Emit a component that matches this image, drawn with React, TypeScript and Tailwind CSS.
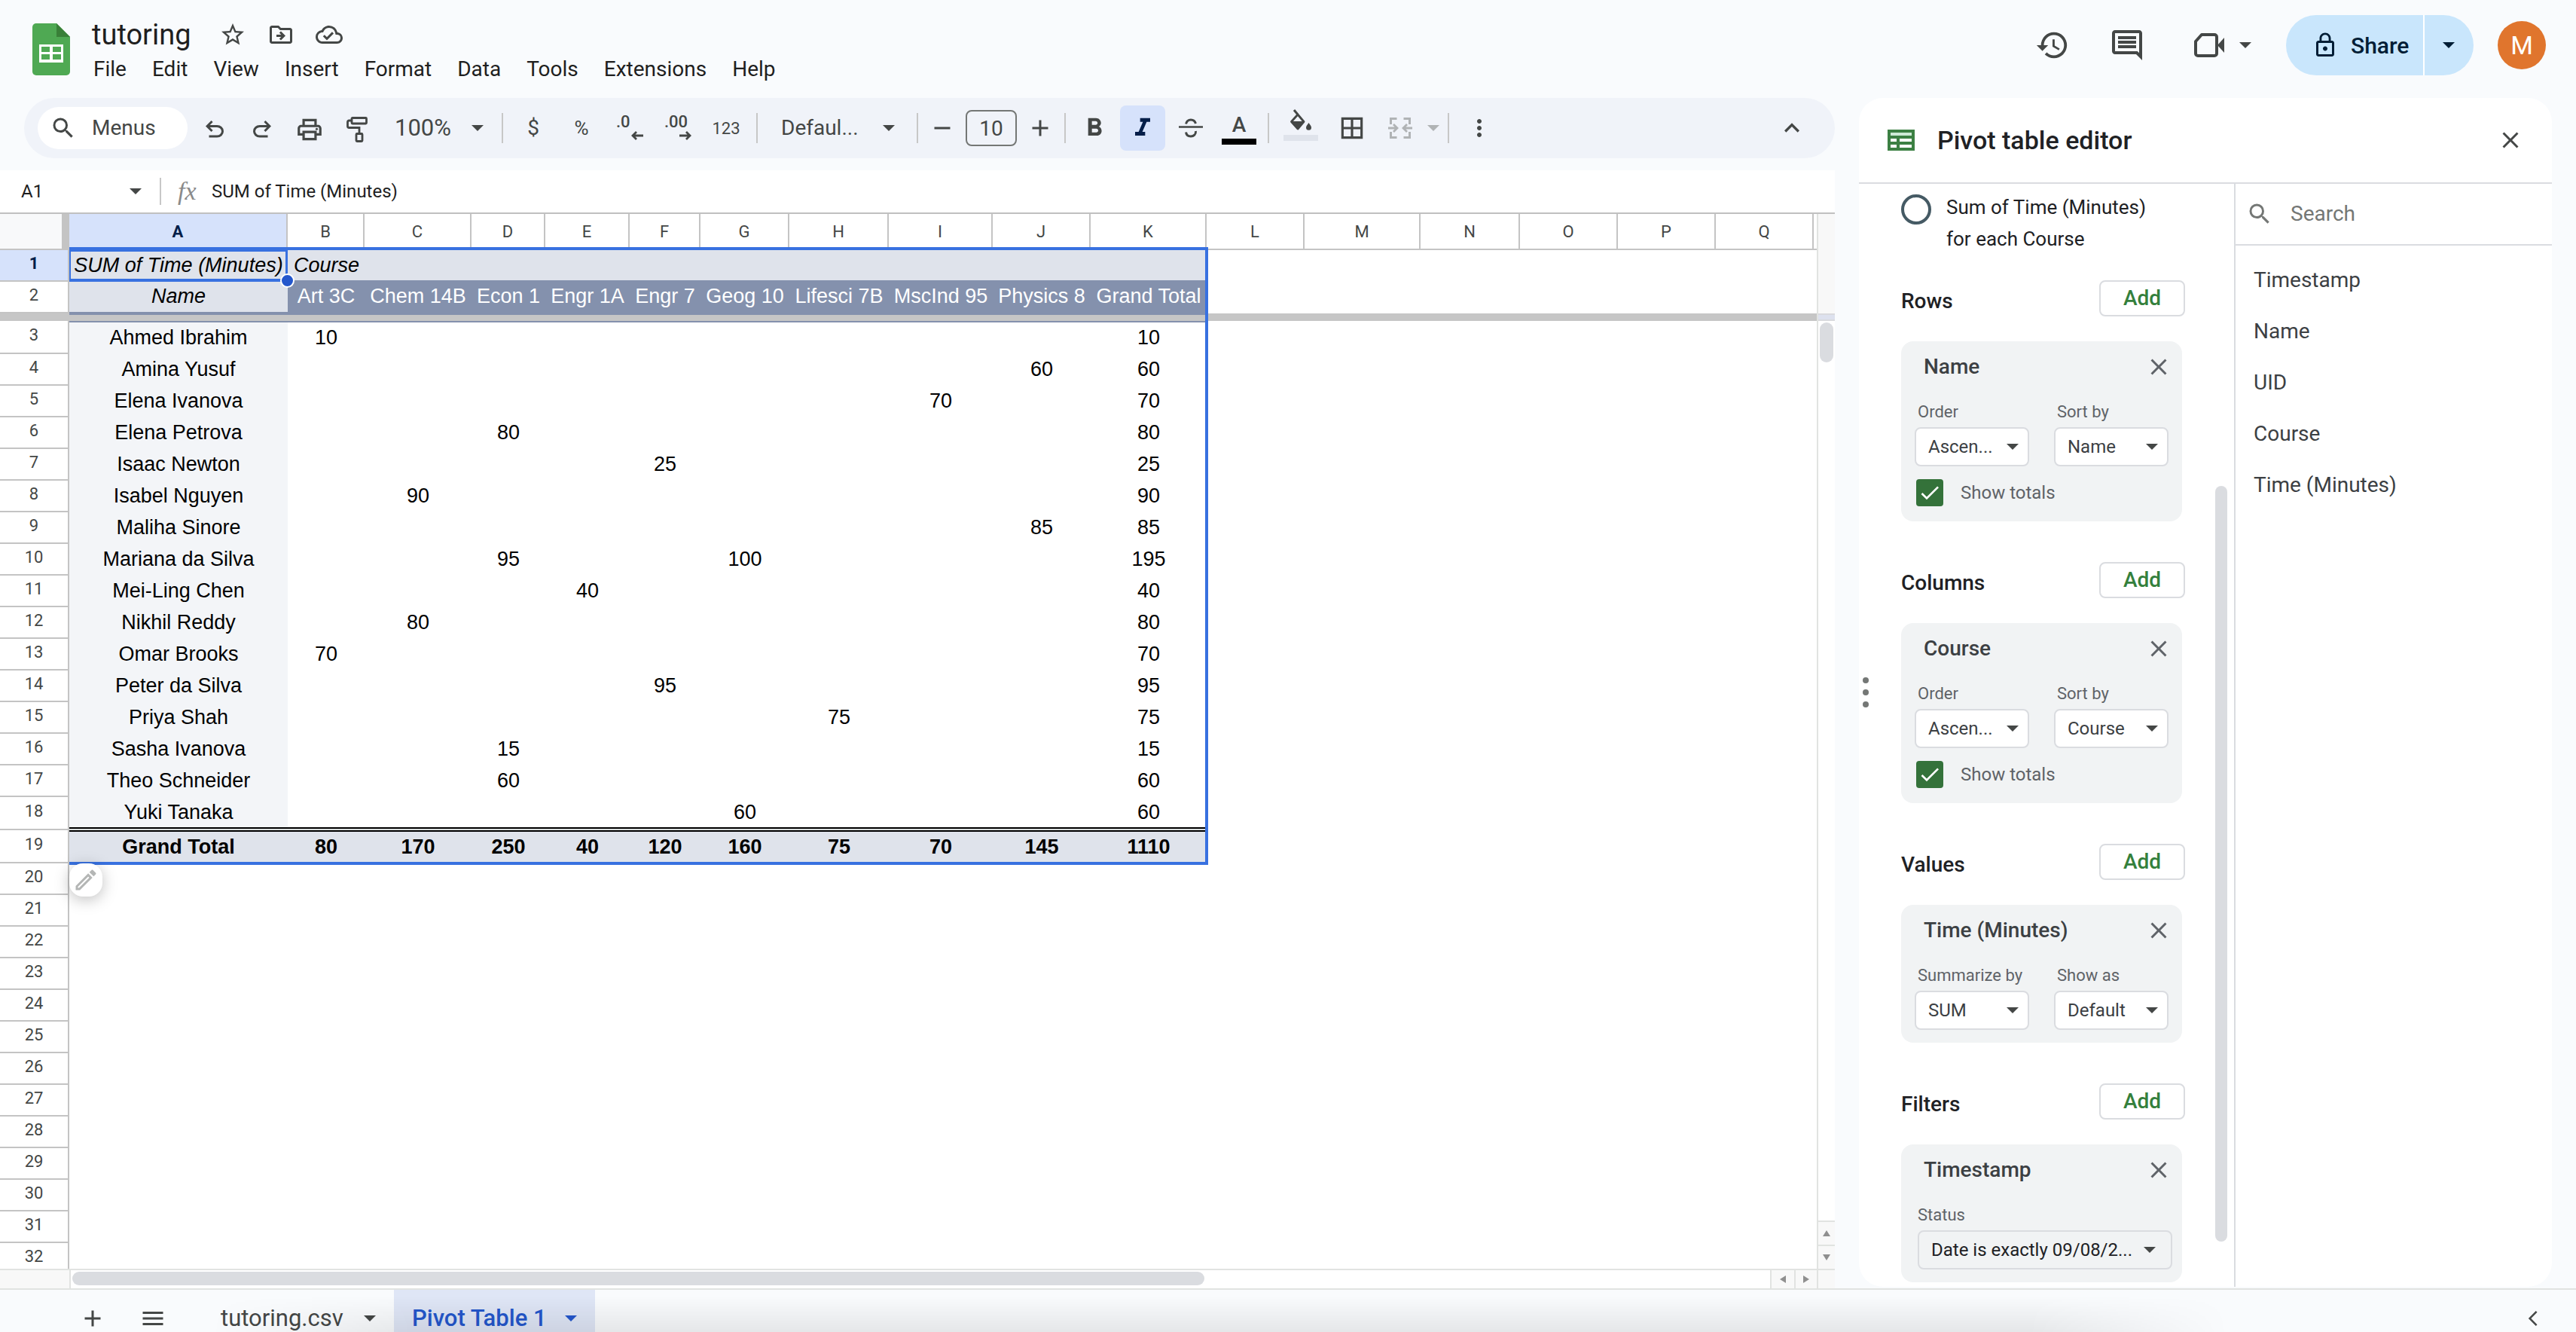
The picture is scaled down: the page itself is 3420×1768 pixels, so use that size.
import React from "react";
import {
  MdStarBorder,
  MdOutlineDriveFileMove,
  MdOutlineCloudDone,
  MdHistory,
  MdOutlineInsertComment,
  MdLockOutline,
  MdSearch,
  MdOutlinePrint,
  MdFormatBold,
  MdFormatItalic,
  MdBorderAll,
  MdMoreVert,
  MdKeyboardArrowUp,
  MdClose,
  MdMenu,
  MdAdd,
  MdRemove,
  MdCheck,
  MdOutlineEdit,
  MdOutlineArrowBackIos,
} from "react-icons/md";

/* ---------- data ---------- */

const menus = ["File", "Edit", "View", "Insert", "Format", "Data", "Tools", "Extensions", "Help"];

const columns = [
  { id: "A", w: "w-[290px]" },
  { id: "B", w: "w-[102px]" },
  { id: "C", w: "w-[142px]" },
  { id: "D", w: "w-[98px]" },
  { id: "E", w: "w-[112px]" },
  { id: "F", w: "w-[94px]" },
  { id: "G", w: "w-[118px]" },
  { id: "H", w: "w-[132px]" },
  { id: "I", w: "w-[138px]" },
  { id: "J", w: "w-[130px]" },
  { id: "K", w: "w-[154px]" },
  { id: "L", w: "w-[130px]" },
  { id: "M", w: "w-[154px]" },
  { id: "N", w: "w-[132px]" },
  { id: "O", w: "w-[130px]" },
  { id: "P", w: "w-[130px]" },
  { id: "Q", w: "w-[130px]" },
];

const courses = ["Art 3C", "Chem 14B", "Econ 1", "Engr 1A", "Engr 7", "Geog 10", "Lifesci 7B", "MscInd 95", "Physics 8", "Grand Total"];

type Student = { name: string; minutes: Record<number, number>; total: number };

const students: Student[] = [
  { name: "Ahmed Ibrahim", minutes: { 0: 10 }, total: 10 },
  { name: "Amina Yusuf", minutes: { 8: 60 }, total: 60 },
  { name: "Elena Ivanova", minutes: { 7: 70 }, total: 70 },
  { name: "Elena Petrova", minutes: { 2: 80 }, total: 80 },
  { name: "Isaac Newton", minutes: { 4: 25 }, total: 25 },
  { name: "Isabel Nguyen", minutes: { 1: 90 }, total: 90 },
  { name: "Maliha Sinore", minutes: { 8: 85 }, total: 85 },
  { name: "Mariana da Silva", minutes: { 2: 95, 5: 100 }, total: 195 },
  { name: "Mei-Ling Chen", minutes: { 3: 40 }, total: 40 },
  { name: "Nikhil Reddy", minutes: { 1: 80 }, total: 80 },
  { name: "Omar Brooks", minutes: { 0: 70 }, total: 70 },
  { name: "Peter da Silva", minutes: { 4: 95 }, total: 95 },
  { name: "Priya Shah", minutes: { 6: 75 }, total: 75 },
  { name: "Sasha Ivanova", minutes: { 2: 15 }, total: 15 },
  { name: "Theo Schneider", minutes: { 2: 60 }, total: 60 },
  { name: "Yuki Tanaka", minutes: { 5: 60 }, total: 60 },
];

const totals = [80, 170, 250, 40, 120, 160, 75, 70, 145, 1110];
const fields = ["Timestamp", "Name", "UID", "Course", "Time (Minutes)"];

/* ---------- drawings ---------- */

function Caret({ className = "" }: { className?: string }) {
  return (
    <svg viewBox="0 0 16 8" className={`h-2 w-4 shrink-0 fill-current ${className}`} aria-hidden>
      <path d="M0 0h16L8 8z" />
    </svg>
  );
}

function SheetsLogo() {
  return (
    <svg viewBox="0 0 50 69" className="h-[69px] w-[50px]" aria-label="Sheets">
      <path d="M5 0h27l18 18v46a5 5 0 0 1-5 5H5a5 5 0 0 1-5-5V5a5 5 0 0 1 5-5z" fill="#4fa953" />
      <path d="M32 0l18 18H32z" fill="#398038" />
      <path d="M9 28h32v24H9z" fill="#fff" />
      <path d="M12 31h11v7H12zM27 31h11v7H27zM12 41h11v7H12zM27 41h11v7H27z" fill="#4fa953" />
    </svg>
  );
}

function PivotIcon() {
  return (
    <svg viewBox="0 0 36 28" className="h-7 w-9" aria-hidden>
      <path d="M0 0h36v28H0z" fill="#3c8043" />
      <path d="M4 4h28v4H4z" fill="#ceead6" />
      <path d="M4 12h8v4H4zM16 12h16v4H16zM4 20h8v4H4zM16 20h16v4H16z" fill="#fff" />
    </svg>
  );
}

function UndoIcon({ flip = false }: { flip?: boolean }) {
  return (
    <svg viewBox="0 -960 960 960" className="h-9 w-9 fill-current" aria-hidden>
      {flip ? (
        <path d="M396-200q-97 0-166.500-63T160-420q0-94 69.500-157T396-640h252L544-744l56-56 200 200-200 200-56-56 104-104H396q-63 0-109.500 40T240-420q0 60 46.500 100T396-280h284v80H396Z" />
      ) : (
        <path d="M280-200v-80h284q63 0 109.500-40T720-420q0-60-46.500-100T564-560H312l104 104-56 56-200-200 200-200 56 56-104 104h252q97 0 166.500 63T800-420q0 94-69.500 157T564-200H280Z" />
      )}
    </svg>
  );
}

function PaintRollerIcon() {
  return (
    <svg viewBox="0 0 28 34" className="h-[34px] w-7" fill="none" stroke="currentColor" strokeWidth="2.800" aria-hidden>
      <rect x="7" y="1.500" width="19.500" height="7.500" rx="1" />
      <path d="M7 5H3.500a2 2 0 0 0-2 2v5.500a2 2 0 0 0 2 2H17V22" />
      <rect x="13" y="22.500" width="8" height="10" rx="1" />
    </svg>
  );
}

function DecimalIcon({ more = false }: { more?: boolean }) {
  return (
    <span className="relative block h-10 w-9 text-left text-[22px] leading-6 font-medium">
      {more ? ".00" : ".0"}
      <svg viewBox="0 0 16 12" className="absolute right-0 bottom-1 h-3 w-4" fill="none" stroke="currentColor" strokeWidth="2.800" aria-hidden>
        {more ? <path d="M0 6h14M9 1l5 5-5 5" /> : <path d="M16 6H2M7 1L2 6l5 5" />}
      </svg>
    </span>
  );
}

function StrikeIcon() {
  return (
    <svg viewBox="0 0 32 26" className="h-[26px] w-8" fill="none" stroke="currentColor" strokeWidth="3" aria-hidden>
      <path d="M9.500 7.500C10.500 3.500 13 2 16 2s5.500 1.500 6.500 5" />
      <path d="M0 11.500h32" strokeWidth="2.500" />
      <path d="M22.500 17c.4 4.500-2.700 7-6.500 7s-6-2-6.500-5.500" />
    </svg>
  );
}

function FillIcon() {
  return (
    <svg viewBox="0 0 30 30" className="h-[30px] w-[30px]" aria-hidden>
      <path d="M6 1l5 6" stroke="currentColor" strokeWidth="3" fill="none" />
      <path d="M11 7l8 9.500L11 26 2.500 16.500z" fill="none" stroke="currentColor" strokeWidth="2.800" strokeLinejoin="round" />
      <path d="M2.500 16h17L11 26.500z" fill="currentColor" />
      <path d="M25.500 18c2 2.700 3.500 4.600 3.500 6.300a3.500 3.500 0 0 1-7 0c0-1.700 1.500-3.600 3.500-6.300z" fill="currentColor" />
    </svg>
  );
}

function MergeIcon() {
  return (
    <svg viewBox="0 0 32 28" className="h-7 w-8 shrink-0" fill="none" stroke="currentColor" strokeWidth="3" aria-hidden>
      <path d="M11.500 1.500h-8V9M3.500 19v7.500h8M20.500 1.500h8V9M28.500 19v7.500h-8" />
      <path d="M0 14h11M7 9l5 5-5 5M32 14H21M25 9l-5 5 5 5" strokeWidth="2.800" />
    </svg>
  );
}

function VideoIcon() {
  return (
    <svg viewBox="0 0 40 32" className="h-8 w-10" aria-hidden>
      <path d="M10 2h17a3 3 0 0 1 3 3v22a3 3 0 0 1-3 3H5a3 3 0 0 1-3-3V11z" fill="none" stroke="currentColor" strokeWidth="4" strokeLinejoin="round" />
      <path d="M31 16l9-10v20z" fill="currentColor" />
    </svg>
  );
}

/* ---------- header ---------- */

function Header() {
  return (
    <header className="flex h-[130px] shrink-0 items-start justify-between pr-10 pl-[43px]">
      <div className="flex">
        <div className="pt-[31px]">
          <SheetsLogo />
        </div>
        <div className="pt-6 pl-[29px]">
          <div className="flex h-11 items-center text-[#444746]">
            <h1 className="text-[38px] leading-[44px] text-[#1f1f1f]">tutoring</h1>
            <div className="ml-[37px] flex gap-7">
              <button aria-label="Star"><MdStarBorder className="size-9" /></button>
              <button aria-label="Move"><MdOutlineDriveFileMove className="size-9" /></button>
              <button aria-label="Saved to Drive"><MdOutlineCloudDone className="size-9" /></button>
            </div>
          </div>
          <nav className="mt-1.5 flex gap-[34px] pl-0.5 text-[28px] leading-9 text-[#1f1f1f]">
            {menus.map((m) => (
              <button key={m}>{m}</button>
            ))}
          </nav>
        </div>
      </div>
      <div className="mt-5 flex h-20 items-center text-[#444746]">
        <button aria-label="History"><MdHistory className="size-[46px]" /></button>
        <button aria-label="Comments" className="ml-[52px]"><MdOutlineInsertComment className="size-12" /></button>
        <button aria-label="Call" className="ml-[65px] flex items-center gap-5">
          <VideoIcon />
          <Caret />
        </button>
        <div className="ml-[46px] flex h-20 overflow-hidden rounded-full bg-[#c9e6fc] text-[#001d35]">
          <button className="flex w-[182px] items-center gap-4 pl-[34px] text-[30px] font-medium">
            <MdLockOutline className="size-9" />
            Share
          </button>
          <button aria-label="Share options" className="flex w-[67px] items-center border-l-2 border-white pl-6"><Caret /></button>
        </div>
        <button className="ml-8 size-16 rounded-full bg-[#e0752d] text-[34px] text-white">M</button>
      </div>
    </header>
  );
}

/* ---------- toolbar ---------- */

function Tool({ label, className = "w-16", children }: { label: string; className?: string; children: React.ReactNode }) {
  return (
    <button aria-label={label} className={`flex h-[60px] shrink-0 items-center justify-center rounded-lg ${className}`}>
      {children}
    </button>
  );
}

function Rule() {
  return <span className="mx-2 h-10 w-0.5 shrink-0 bg-[#c7c7c7]" />;
}

function Toolbar() {
  return (
    <div className="ml-8 flex h-20 shrink-0 items-center rounded-full bg-[#f0f3f9] pr-[25px] pl-[18px] text-[28px] text-[#444746]">
      <button className="flex h-14 w-[199px] items-center gap-5 rounded-full bg-white pl-4">
        <MdSearch className="size-9" />
        Menus
      </button>
      <div className="ml-1 flex">
        <Tool label="Undo" className="w-[63px] pt-1"><UndoIcon /></Tool>
        <Tool label="Redo" className="w-[63px] pt-1"><UndoIcon flip /></Tool>
        <Tool label="Print" className="w-[63px] pt-1"><MdOutlinePrint className="size-[38px]" /></Tool>
        <Tool label="Paint format" className="w-[63px] pt-1"><PaintRollerIcon /></Tool>
      </div>
      <button className="flex w-[153px] items-center justify-between pr-4 pl-[19px] text-[31px]">
        100% <Caret />
      </button>
      <Rule />
      <Tool label="Currency">$</Tool>
      <Tool label="Percent"><span className="text-[26px]">%</span></Tool>
      <Tool label="Decrease decimals"><DecimalIcon /></Tool>
      <Tool label="Increase decimals"><DecimalIcon more /></Tool>
      <Tool label="More formats"><span className="text-[22px]">123</span></Tool>
      <Rule />
      <button className="flex w-[195px] items-center justify-between pr-[21px] pl-[23px]">
        Defaul... <Caret />
      </button>
      <Rule />
      <div className="flex items-center gap-[7px]">
        <Tool label="Smaller" className="w-12"><MdRemove className="size-9" /></Tool>
        <input aria-label="Font size" defaultValue="10" className="h-12 w-[68px] rounded-lg border-2 border-[#747775] bg-transparent text-center text-[28px]" />
        <Tool label="Larger" className="w-12"><MdAdd className="size-9" /></Tool>
      </div>
      <Rule />
      <div className="flex gap-1">
        <Tool label="Bold" className="w-[60px]"><MdFormatBold className="size-10" /></Tool>
        <Tool label="Italic" className="w-[60px] bg-[#d6e2fb] text-[#041e49]"><MdFormatItalic className="size-10" /></Tool>
        <Tool label="Strikethrough" className="w-[60px]"><StrikeIcon /></Tool>
        <Tool label="Text color" className="w-[60px] flex-col pt-2">
          <span className="text-[28px] leading-7 font-medium">A</span>
          <span className="mt-1 mb-1 h-2 w-[46px] bg-black" />
        </Tool>
      </div>
      <Rule />
      <div className="ml-0.5 flex gap-1 text-[#444746]">
        <Tool label="Fill color" className="w-16 flex-col">
          <FillIcon />
          <span className="mt-1 mb-2 h-2 w-[46px] bg-[#dfe3eb]" />
        </Tool>
        <Tool label="Borders"><MdBorderAll className="size-[38px]" /></Tool>
        <Tool label="Merge" className="w-[83px] gap-5 pl-2 text-[#b0b3b5]">
          <MergeIcon />
          <Caret />
        </Tool>
      </div>
      <Rule />
      <Tool label="More"><MdMoreVert className="size-9" /></Tool>
      <Tool label="Hide menus" className="ml-auto w-16"><MdKeyboardArrowUp className="size-10" /></Tool>
    </div>
  );
}

function FormulaBar() {
  return (
    <div className="mt-4 flex h-[58px] shrink-0 items-center border-b-2 border-[#c0c0c0] bg-white text-[24px] text-[#1f1f1f]">
      <input aria-label="Name box" defaultValue="A1" className="w-[172px] bg-transparent pl-7 outline-none" />
      <Caret className="text-[#444746]" />
      <span className="ml-6 h-9 w-0.5 bg-[#c7c7c7]" />
      <span className="w-[67px] pl-[22px] font-['Liberation_Serif',serif] text-[34px] leading-none text-[#8a8a8a] italic">fx</span>
      <input aria-label="Formula" defaultValue="SUM of Time (Minutes)" className="min-w-0 flex-1 bg-transparent outline-none" />
    </div>
  );
}

/* ---------- grid ---------- */

function RowHead({ n, active = false }: { n: number; active?: boolean }) {
  return (
    <th
      scope="row"
      className={
        active
          ? "border-r-2 border-b-2 border-[#c4c4c4] bg-[#d6e2fb] pb-1 align-middle font-['Roboto',sans-serif] text-[22px] leading-6 font-bold text-[#041e49] not-italic"
          : "border-r-2 border-b-2 border-[#c4c4c4] bg-white pb-1 align-middle font-['Roboto',sans-serif] text-[22px] leading-6 font-normal text-[#444746] not-italic"
      }
    >
      {n}
    </th>
  );
}

function Grid() {
  return (
    <div className="min-h-0 flex-1 overflow-hidden bg-white">
      <div className="relative">
        <table className="w-full table-fixed border-separate border-spacing-0 text-center whitespace-nowrap">
          <colgroup>
            <col className="w-[92px]" />
            {columns.map((c) => (
              <col key={c.id} className={c.w} />
            ))}
            <col />
          </colgroup>
          <thead>
            <tr className="h-12 text-[22px] text-[#444746]">
              <th className="border-r-[10px] border-b-2 border-[#c4c4c4] bg-[#f8f9fa]" />
              {columns.map((c) => (
                <th
                  key={c.id}
                  scope="col"
                  className={
                    c.id === "A"
                      ? "border-r-2 border-b-2 border-[#c4c4c4] bg-[#d6e2fb] font-bold text-[#041e49]"
                      : "border-r-2 border-b-2 border-[#c4c4c4] font-normal"
                  }
                >
                  {c.id}
                </th>
              ))}
              <th className="border-b-2 border-[#c4c4c4]" />
            </tr>
          </thead>
          <tbody className="font-['Liberation_Sans',Arial,sans-serif] text-[27px] leading-10 text-black">
            <tr className="h-[42px] italic">
              <RowHead n={1} active />
              <td className="relative bg-[#dfe3eb] align-top">
                SUM of Time (Minutes)
                <span className="absolute -top-1 right-0 bottom-0 left-0 border-t-[6px] border-r-[3px] border-b-4 border-l-2 border-[#3871e0]" />
                <span className="absolute -right-[9px] -bottom-2 z-20 size-[19px] rounded-full border-2 border-white bg-[#2457cc]" />
              </td>
              <td colSpan={10} className="border-b-2 border-[#8491ad] bg-[#dfe3eb] pl-2 text-left align-top">Course</td>
            </tr>
            <tr className="h-[42px]">
              <RowHead n={2} />
              <td className="border-b-2 border-[#8491ad] bg-[#dfe3eb] align-top leading-[38px] italic">Name</td>
              {courses.map((c) => (
                <td key={c} className="bg-[#8491ad] align-top leading-[38px] text-white">{c}</td>
              ))}
            </tr>
            <tr className="h-2.5 leading-[0]">
              <td className="h-2.5 bg-[#c6c6c6]" />
              <td colSpan={11} className="border-t-2 border-[#8491ad] bg-[#c6c6c6]" />
              <td colSpan={7} className="bg-[#c6c6c6]" />
            </tr>
            {students.map((s, i) => {
              const first = i === 0;
              const last = i === students.length - 1;
              const edge = first
                ? "border-t-2 border-[#8491ad]"
                : last
                  ? "border-b-2 border-[#d9dedd] shadow-[inset_0_-2px_0_#000]"
                  : "";
              return (
                <tr key={s.name} className={first || last ? "h-11" : "h-[42px]"}>
                  <RowHead n={i + 3} />
                  <td className={`bg-[#f3f5f8] align-top ${edge}`}>{s.name}</td>
                  {courses.slice(0, 9).map((c, j) => (
                    <td key={c} className={`align-top ${edge}`}>{s.minutes[j] ?? ""}</td>
                  ))}
                  <td className={`align-top ${edge}`}>{s.total}</td>
                </tr>
              );
            })}
            <tr className="h-11 font-bold">
              <RowHead n={19} />
              <td className="border-t-2 border-black bg-[#dfe3eb] align-top">Grand Total</td>
              {totals.map((t) => (
                <td key={t} className="border-t-2 border-black bg-[#dfe3eb] align-top">{t}</td>
              ))}
            </tr>
            {Array.from({ length: 13 }, (_, i) => i + 20).map((n) => (
              <tr key={n} className="h-[42px]">
                <RowHead n={n} />
                <td className="relative">
                  {n === 20 && (
                    <button aria-label="Edit pivot table" className="absolute top-0 left-0 z-20 flex size-11 items-center justify-center rounded-[18px] bg-white text-[#b4b6b5] shadow-[0_4px_20px_rgba(0,0,0,0.25)]">
                      <MdOutlineEdit className="size-9" />
                    </button>
                  )}
                </td>
              </tr>
            ))}
          </tbody>
        </table>
        <div className="pointer-events-none absolute top-11 left-[92px] z-10 h-[820px] w-[1512px] border-4 border-l-0 border-[#3871e0]" />
      </div>
    </div>
  );
}

function ScrollArrow({ d, className }: { d: string; className: string }) {
  return (
    <button aria-label="Scroll" className={`flex shrink-0 items-center justify-center border-[#e1e3e1] bg-[#f8f8f8] ${className}`}>
      <svg viewBox="0 0 12 12" className="size-3 fill-[#8f8f8f]" aria-hidden>
        <path d={d} />
      </svg>
    </button>
  );
}

function Sheet() {
  return (
    <section className="flex min-w-0 flex-1 flex-col">
      <Toolbar />
      <FormulaBar />
      <div className="flex min-h-0 flex-1">
        <Grid />
        <div className="flex w-6 shrink-0 flex-col border-l-2 border-[#e1e3e1] bg-white">
          <div className="h-[132px] bg-[#f8f8f8]" />
          <div className="h-2.5 border-y-2 border-[#d9dade] bg-[#dde1ee]" />
          <div className="flex-1 pt-0.5 pl-0.5">
            <div className="h-[53px] w-[18px] rounded-full bg-[#dadce0]" />
          </div>
          <ScrollArrow d="M6 2l5 8H1z" className="h-8 w-full border-t-2" />
          <ScrollArrow d="M6 10l5-8H1z" className="h-8 w-full border-t-2" />
        </div>
      </div>
      <div className="flex h-[26px] shrink-0 border-t-2 border-[#e1e3e1] bg-white">
        <div className="w-[94px] border-r-2 border-[#e1e3e1] bg-[#f8f8f8]" />
        <div className="flex-1 pt-0.5 pl-0.5">
          <div className="h-[18px] w-2/3 rounded-full bg-[#dadce0]" />
        </div>
        <ScrollArrow d="M2 6l8-5v10z" className="h-full w-8 border-l-2" />
        <ScrollArrow d="M10 6L2 1v10z" className="h-full w-[30px] border-l-2" />
        <div className="w-6 border-l-2 border-[#e1e3e1] bg-[#f8f8f8]" />
      </div>
    </section>
  );
}

/* ---------- pivot editor ---------- */

function Picker({ id, label, value, className = "w-[152px]" }: { id: string; label: string; value: string; className?: string }) {
  return (
    <div className={className}>
      <label htmlFor={id} className="block pl-1 text-[22px] leading-7 text-[#5f6368]">{label}</label>
      <div className="relative mt-1.5">
        <select id={id} className="h-[52px] w-full appearance-none rounded-lg border-2 border-[#dadce0] bg-white pl-4 text-[24px] text-[#3c4043]">
          <option>{value}</option>
        </select>
        <Caret className="pointer-events-none absolute top-[22px] right-3.5 text-[#444746]" />
      </div>
    </div>
  );
}

function Section({ title, children }: { title: string; children: React.ReactNode }) {
  return (
    <section>
      <div className="flex w-[377px] items-center justify-between">
        <h3 className="pt-2 text-[28px] leading-9 font-medium text-[#202124]">{title}</h3>
        <button className="h-12 w-[114px] rounded-lg border-2 border-[#dadce0] text-[28px] leading-8 font-medium text-[#34803c]">Add</button>
      </div>
      {children}
    </section>
  );
}

function Card({ title, totals: totalsId, children }: { title: string; totals?: string; children: React.ReactNode }) {
  return (
    <div className="mt-[33px] w-[373px] rounded-2xl bg-[#f1f3f4] pt-4 pr-[13px] pb-[17px] pl-[18px]">
      <div className="flex items-center justify-between pl-3">
        <h4 className="text-[28px] leading-9 font-medium text-[#3c4043]">{title}</h4>
        <button aria-label={`Remove ${title}`}><MdClose className="size-9 text-[#5f6368]" /></button>
      </div>
      <div className="mt-7">{children}</div>
      {totalsId && (
        <div className="mt-[17px] mb-[3px] flex items-center gap-[23px]">
          <span className="relative ml-0.5 size-9">
            <input id={totalsId} type="checkbox" defaultChecked className="block size-9 appearance-none rounded bg-[#34723a]" />
            <MdCheck className="pointer-events-none absolute top-0.5 left-0.5 size-8 text-white" />
          </span>
          <label htmlFor={totalsId} className="text-[24px] text-[#5f6368]">Show totals</label>
        </div>
      )}
    </div>
  );
}

function PivotEditor() {
  return (
    <aside className="w-[984px] shrink-0 px-8 pb-0.5">
      <div className="flex h-full flex-col overflow-hidden rounded-[32px] bg-white">
        <div className="flex h-[114px] shrink-0 items-center border-b-2 border-[#dadce0] pr-[37px] pl-[38px]">
          <PivotIcon />
          <h2 className="ml-[30px] flex-1 text-[34px] font-medium text-[#202124]">Pivot table editor</h2>
          <button aria-label="Close"><MdClose className="size-9 text-[#444746]" /></button>
        </div>
        <div className="flex min-h-0 flex-1">
          <div className="relative w-[500px] shrink-0 overflow-hidden border-r-2 border-[#dadce0] pt-2.5 pl-14">
            <div className="flex gap-5">
              <input id="suggestion" type="radio" className="mt-1 size-10 shrink-0 appearance-none rounded-full border-4 border-[#455a64]" />
              <label htmlFor="suggestion" className="text-[26px] leading-[42px] text-[#202124]">
                Sum of Time (Minutes)
                <br />
                for each Course
              </label>
            </div>
            <div className="mt-[34px] flex flex-col gap-[54px]">
              <Section title="Rows">
                <Card title="Name" totals="row-totals">
                  <div className="flex gap-[33px]">
                    <Picker id="row-order" label="Order" value="Ascen..." />
                    <Picker id="row-sort" label="Sort by" value="Name" />
                  </div>
                </Card>
              </Section>
              <Section title="Columns">
                <Card title="Course" totals="col-totals">
                  <div className="flex gap-[33px]">
                    <Picker id="col-order" label="Order" value="Ascen..." />
                    <Picker id="col-sort" label="Sort by" value="Course" />
                  </div>
                </Card>
              </Section>
              <Section title="Values">
                <Card title="Time (Minutes)">
                  <div className="flex gap-[33px]">
                    <Picker id="summarize" label="Summarize by" value="SUM" className="w-[152px] whitespace-nowrap" />
                    <Picker id="show-as" label="Show as" value="Default" />
                  </div>
                </Card>
              </Section>
              <Section title="Filters">
                <Card title="Timestamp">
                  <label htmlFor="status" className="block pl-1 text-[22px] leading-7 text-[#5f6368]">Status</label>
                  <div className="relative mt-1.5 ml-1">
                    <select id="status" className="h-[52px] w-full appearance-none rounded-lg border-2 border-[#dadce0] bg-transparent pl-4 text-[24px] text-[#202124]">
                      <option>Date is exactly 09/08/2...</option>
                    </select>
                    <Caret className="pointer-events-none absolute top-[22px] right-[22px] text-[#444746]" />
                  </div>
                </Card>
              </Section>
            </div>
            <div className="absolute top-[655px] left-[5px] flex flex-col gap-2">
              <span className="size-2 rounded-full bg-[#747775]" />
              <span className="size-2 rounded-full bg-[#747775]" />
              <span className="size-2 rounded-full bg-[#747775]" />
            </div>
            <div className="absolute top-[401px] right-[9px] bottom-[60px] w-4 rounded-full bg-[#dadce0]" />
          </div>
          <div className="min-w-0 flex-1">
            <label className="flex h-[82px] items-center gap-[23px] border-b-2 border-[#dadce0] pl-[14px] text-[#747775]">
              <MdSearch className="size-9" />
              <input placeholder="Search" aria-label="Search" className="min-w-0 flex-1 bg-transparent text-[28px] outline-none placeholder:text-[#747775]" />
            </label>
            <ul className="pt-3 pl-6 text-[28px] leading-[68px] text-[#3c4043]">
              {fields.map((f) => (
                <li key={f}>{f}</li>
              ))}
            </ul>
          </div>
        </div>
      </div>
    </aside>
  );
}

/* ---------- sheet tabs ---------- */

function Tabs() {
  return (
    <footer className="relative h-[58px] shrink-0 overflow-hidden border-t-2 border-[#e1e3e1]">
      <div className="flex h-[76px] items-center text-[31px] text-[#444746]">
        <button aria-label="Add sheet" className="ml-[105px]"><MdAdd className="size-9" /></button>
        <button aria-label="All sheets" className="ml-11"><MdMenu className="size-9" /></button>
        <button className="ml-[58px] flex h-full w-[244px] items-center justify-between pr-6 pl-3.5">
          tutoring.csv <Caret />
        </button>
        <button className="flex h-full w-[267px] items-center justify-between bg-[#dfe6f6] pr-6 pl-6 font-medium text-[#2457cc]">
          Pivot Table 1 <Caret />
        </button>
        <button aria-label="Show side panel" className="mr-[45px] ml-auto"><MdOutlineArrowBackIos className="size-6" /></button>
      </div>
      <div className="pointer-events-none absolute right-[460px] bottom-0 left-[280px] h-12 bg-gradient-to-t from-black/8 to-transparent [mask-image:linear-gradient(to_right,transparent,black_10%,black_90%,transparent)]" />
    </footer>
  );
}

export default function App() {
  return (
    <div className="flex h-screen flex-col overflow-hidden bg-[#f9fbfd] font-['Roboto',sans-serif]">
      <Header />
      <main className="flex min-h-0 flex-1">
        <Sheet />
        <PivotEditor />
      </main>
      <Tabs />
    </div>
  );
}
